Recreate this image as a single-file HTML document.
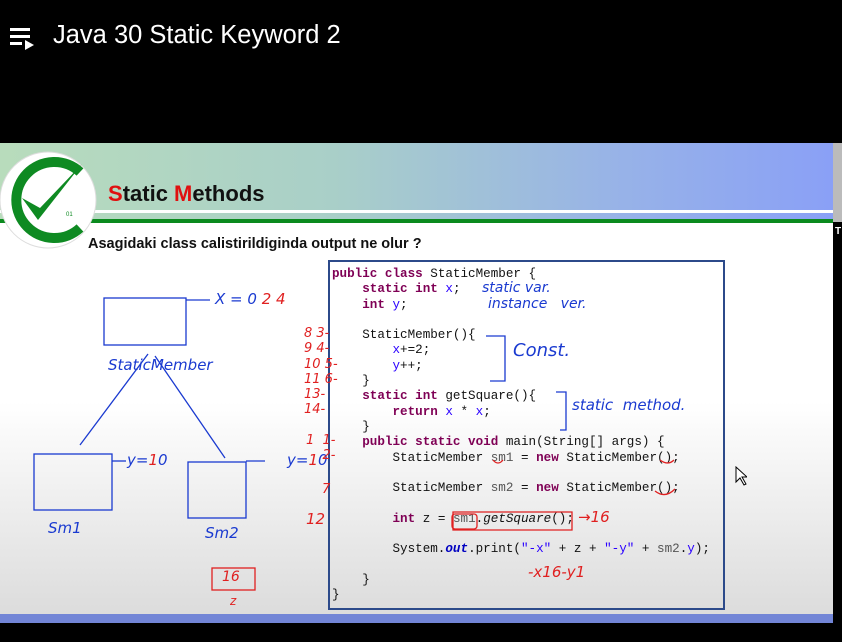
<!DOCTYPE html>
<html><head><meta charset="utf-8"><style>
*{margin:0;padding:0;box-sizing:border-box}
body{width:842px;height:642px;background:#000;position:relative;overflow:hidden;font-family:"Liberation Sans",sans-serif}
.abs{position:absolute}
.title{left:53px;top:21px;color:#fff;font-size:25.5px}
.slide{left:0;top:143px;width:833px;height:471px;background:linear-gradient(#fff 0,#fff 55%,#dcdcdc 100%)}
.hdr{left:0;top:143px;width:833px;height:77px;background:linear-gradient(90deg,#b8dcbc 0%,#a9cfc8 40%,#97b2e8 75%,#8aa0f6 100%)}
.wl{left:0;top:210px;width:833px;height:3px;background:#fff}
.gl{left:0;top:219px;width:833px;height:4px;background:#0b8a1e}
.h1{left:108px;top:181px;font-size:22px;font-weight:bold;color:#111}
.q{left:88px;top:236px;font-size:14.5px;font-weight:bold;color:#111}
.code{left:328px;top:260px;width:397px;height:350px;border:2px solid #2c4a8a}
pre{position:absolute;left:332px;top:267px;font-family:"Liberation Mono",monospace;font-size:12.6px;line-height:15.3px;color:#111}
.k{color:#7f0055;font-weight:bold}.b{color:#2a00ff}.f{color:#0000c0;font-style:italic;font-weight:bold}.g{color:#555}
.r{color:#e02020;font-family:"DejaVu Sans",sans-serif;font-style:italic}
.bl{color:#1a3ad0;font-family:"DejaVu Sans",sans-serif;font-style:italic}
</style></head><body>
<svg class="abs" style="left:10px;top:26px" width="26" height="24" viewBox="0 0 26 24"><rect x="0" y="2" width="20" height="3" fill="#fff"/><rect x="0" y="9" width="20" height="3" fill="#fff"/><rect x="0" y="16" width="12" height="3" fill="#fff"/><path d="M15 14 L24 19 L15 24Z" fill="#fff"/></svg>
<div class="abs title">Java 30 Static Keyword 2</div>
<div class="abs slide"></div>
<div class="abs hdr"></div>
<div class="abs wl"></div>
<div class="abs gl"></div>
<div class="abs" style="left:833px;top:143px;width:9px;height:79px;background:#bbb"></div>
<div class="abs" style="left:835px;top:226px;color:#fff;font-size:10px;font-weight:bold">T</div>
<div class="abs" style="left:0;top:614px;width:833px;height:9px;background:#7285d6"></div>
<svg class="abs" style="left:0;top:150px" width="100" height="100" viewBox="0 0 100 100">
<circle cx="48" cy="50" r="48" fill="#fff" stroke="#ddd"/>
<path d="M80 22 A38 38 0 1 0 80 78" fill="none" stroke="#0e8a22" stroke-width="10"/>
<path d="M22 48 L38 70 L82 14 L40 58 Z" fill="#0e8a22"/>
<text x="66" y="66" font-size="6" fill="#0e8a22" font-family="Liberation Sans">01</text>
</svg>
<div class="abs h1"><span style="color:#e01010">S</span>tatic <span style="color:#e01010">M</span>ethods</div>
<div class="abs q">Asagidaki class calistirildiginda output ne olur ?</div>
<div class="abs code"></div>
<pre><span class="k">public class</span> StaticMember {
    <span class="k">static int</span> <span class="b">x</span>;
    <span class="k">int</span> <span class="b">y</span>;

    StaticMember(){
        <span class="b">x</span>+=2;
        <span class="b">y</span>++;
    }
    <span class="k">static int</span> getSquare(){
        <span class="k">return</span> <span class="b">x</span> * <span class="b">x</span>;
    }
    <span class="k">public static void</span> main(String[] args) {
        StaticMember <span class="g">sm1</span> = <span class="k">new</span> StaticMember();

        StaticMember <span class="g">sm2</span> = <span class="k">new</span> StaticMember();

        <span class="k">int</span> z = <span class="g">sm1</span>.<i>getSquare</i>();

        System.<span class="f">out</span>.print(<span class="b">"-x"</span> + z + <span class="b">"-y"</span> + <span class="g">sm2</span>.<span class="b">y</span>);

    }
}</pre>
<div class="abs bl" style="left:482px;top:280px;font-size:14px">static var.</div>
<div class="abs bl" style="left:488px;top:296px;font-size:14px">instance&nbsp;&nbsp; ver.</div>
<div class="abs bl" style="left:513px;top:340px;font-size:18px">Const.</div>
<div class="abs bl" style="left:572px;top:396px;font-size:15px">static&nbsp; method.</div>
<svg class="abs" style="left:0;top:0" width="842" height="642">
<g fill="none" stroke="#1a3ad0" stroke-width="1.3">
<path d="M486 336 H505 V381 H490"/><path d="M556 392 H566 V430 H560"/>
<rect x="104" y="298" width="82" height="47"/><path d="M186 300 H210"/>
<path d="M148 354 L80 445"/><path d="M155 356 L225 458"/>
<rect x="34" y="454" width="78" height="56"/><path d="M112 461 H126"/>
<rect x="188" y="462" width="58" height="56"/><path d="M246 461 H265"/>
</g>
<g fill="none" stroke="#e02020" stroke-width="1.3">
<path d="M453 512 H572 V530 H453 Z"/><rect x="452" y="514" width="25" height="15" rx="3"/>
<rect x="212" y="568" width="43" height="22"/>
<path d="M493 460 q5 6 10 0 M660 460 q8 6 14 0 M655 491 q10 8 20 -2"/>
</g>
</svg>
<div class="abs bl" style="left:215px;top:290px;font-size:15px">X = 0 <span class="r">2 4</span></div>
<div class="abs bl" style="left:108px;top:356px;font-size:15px">StaticMember</div>
<div class="abs bl" style="left:127px;top:451px;font-size:15px">y=<span class="r">1</span>0</div>
<div class="abs bl" style="left:287px;top:451px;font-size:15px">y=<span class="r">1</span>0</div>
<div class="abs bl" style="left:48px;top:519px;font-size:15px">Sm1</div>
<div class="abs bl" style="left:205px;top:524px;font-size:15px">Sm2</div>
<div class="abs r" style="left:222px;top:569px;font-size:14px">16</div>
<div class="abs r" style="left:230px;top:594px;font-size:12px">z</div>
<div class="abs r" style="left:304px;top:326px;font-size:13px;line-height:15.3px">8 3-<br>9 4-<br>10 5-<br>11 6-<br>13-<br>14-</div>
<div class="abs r" style="left:306px;top:433px;font-size:13px;line-height:15.3px">1 &nbsp;1-<br>&nbsp;&nbsp;&nbsp;&nbsp;2-</div>
<div class="abs r" style="left:322px;top:482px;font-size:13px">7</div>
<div class="abs r" style="left:306px;top:510px;font-size:15px">12</div>
<div class="abs r" style="left:578px;top:508px;font-size:15px">→16</div>
<div class="abs r" style="left:528px;top:563px;font-size:15px">-x16-y1</div>
<svg class="abs" style="left:735px;top:466px" width="12" height="20"><path d="M1 1 V16 L5 12 L9 19 L11 18 L7 11 H12 Z" fill="#fff" stroke="#000"/></svg>
</body></html>
